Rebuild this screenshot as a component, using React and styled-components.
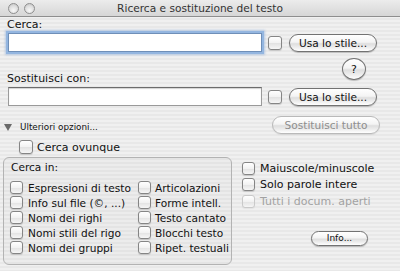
import React from 'react'
import styled, { createGlobalStyle, css } from 'styled-components'

const GlobalStyle = createGlobalStyle`
  html, body { margin: 0; padding: 0; }
  body {
    font-family: "Lucida Grande", "DejaVu Sans", sans-serif;
    font-size: 11px;
    color: #111;
  }
  * { box-sizing: border-box; }
`

const Window = styled.div`
  width: 400px;
  height: 271px;
  overflow: hidden;
  display: flex;
  flex-direction: column;
  background: repeating-linear-gradient(to bottom, #f0f0f0 0 2px, #e8e8e8 2px 4px);
`

const TitleBar = styled.div`
  height: 17px;
  flex: none;
  display: grid;
  grid-template-columns: 1fr auto 1fr;
  align-items: center;
  background: linear-gradient(to bottom, #ececec, #d6d6d6);
  border-bottom: 1px solid #8e8e8e;
`

const Lights = styled.div`
  display: flex;
  gap: 5px;
  padding-left: 8px;
`

const Light = styled.span`
  width: 11px;
  height: 11px;
  border-radius: 50%;
  border: 1px solid #8f8f8f;
  background: radial-gradient(circle at 50% 70%, #f8f8f8 0, #dedede 55%, #bdbdbd 100%);
`

const Title = styled.div`
  font-size: 10.6px;
  color: #333;
  line-height: 16px;
`

const Label = styled.div`
  line-height: 13px;
  padding-left: 7px;
  margin-top: ${p => p.$top || 0}px;
  align-self: ${p => p.$bottom ? 'flex-end' : 'auto'};
`

const FieldRow = styled.div`
  display: flex;
  align-items: center;
  height: 19px;
  padding-left: 8px;
  margin-top: ${p => p.$top || 0}px;
`

const TextField = styled.div`
  width: 254px;
  height: 19px;
  background: #fff;
  border: 1px solid #9a9a9a;
  border-top-color: #6c6c6c;
  box-shadow: inset 0 1px 1px rgba(0, 0, 0, 0.18);
  ${p => p.$focus && css`
    border-color: #6f8fb8;
    box-shadow: 0 0 0 2px #94b6e0, 0 0 2px 3px rgba(120, 160, 215, 0.45);
  `}
`

const Box = styled.span`
  flex: none;
  width: ${p => p.$size || 13}px;
  height: ${p => p.$size || 13}px;
  border-radius: 3px;
  border: 1px solid ${p => p.$disabled ? '#c9c9c9' : '#858585'};
  background: linear-gradient(to bottom, #ffffff, #f2f2f2 50%, #e2e2e2 51%, #f6f6f6);
  box-shadow: 0 1px 1px rgba(0, 0, 0, ${p => p.$disabled ? 0.05 : 0.15});
  margin-left: ${p => p.$left || 0}px;
`

const Button = styled.div`
  flex: none;
  display: flex;
  align-items: center;
  justify-content: center;
  width: ${p => p.$w}px;
  height: ${p => p.$h || 18}px;
  margin-left: ${p => p.$left || 0}px;
  margin-top: ${p => p.$top || 0}px;
  border-radius: 999px;
  font-size: ${p => p.$small ? 9 : 10.6}px;
  color: ${p => p.$disabled ? '#8e8e8e' : '#111'};
  border: 1px solid ${p => p.$disabled ? '#b9b9b9' : '#727272'};
  background: linear-gradient(to bottom, #ffffff 0%, #f4f4f4 45%, #dedede 55%, #f3f3f3 85%, #ffffff 100%);
  box-shadow: 0 1px 1px rgba(0, 0, 0, ${p => p.$disabled ? 0.08 : 0.22});
`

const LabelRow = styled.div`
  display: flex;
  justify-content: space-between;
  height: 27px;
  margin-top: 6px;
  padding-right: 34px;
`

const HelpButton = styled.div`
  width: 24px;
  height: 22px;
  border-radius: 50%;
  border: 1px solid #727272;
  display: flex;
  align-items: center;
  justify-content: center;
  font-size: 11px;
  background: linear-gradient(to bottom, #ffffff 0%, #f4f4f4 45%, #dedede 55%, #f3f3f3 85%, #ffffff 100%);
  box-shadow: 0 1px 1px rgba(0, 0, 0, 0.22);
`

const OptionsRow = styled.div`
  display: flex;
  justify-content: space-between;
  align-items: flex-end;
  height: 18px;
  margin-top: 10px;
  padding-right: 20px;
`

const Disclosure = styled.div`
  display: flex;
  align-items: center;
  font-size: 8.8px;
  line-height: 11px;
  padding-left: 4px;
  margin-bottom: 1px;
`

const Triangle = styled.span`
  width: 0;
  height: 0;
  border-left: 4px solid transparent;
  border-right: 4px solid transparent;
  border-top: 7px solid #6b6b6b;
  margin-right: 8px;
`

const Check = styled.div`
  display: flex;
  align-items: center;
  height: ${p => p.$h || 15}px;
  gap: ${p => p.$gap || 5}px;
  padding-left: ${p => p.$indent || 0}px;
  margin-top: ${p => p.$top || 0}px;
  color: ${p => p.$disabled ? '#a2a2a2' : '#111'};
  white-space: nowrap;
`

const Bottom = styled.div`
  display: flex;
  margin-top: 3px;
  padding-left: 3px;
`

const Group = styled.div`
  width: 229px;
  height: 108px;
  border: 1px solid #b3b3b3;
  border-radius: 6px;
  background: rgba(0, 0, 0, 0.015);
  padding: 3px 0 0 6px;
  font-size: 10.6px;
`

const GroupTitle = styled.div`
  line-height: 13px;
  padding-left: 1px;
  margin-bottom: 6px;
`

const GroupGrid = styled.div`
  display: grid;
  grid-template-columns: 128px auto;
  grid-template-rows: repeat(5, 15px);
  grid-auto-flow: column;
`

const Side = styled.div`
  display: flex;
  flex-direction: column;
  padding: 3px 0 0 10px;
`

const primary = ['Espressioni di testo', 'Info sul file (©, ...)', 'Nomi dei righi', 'Nomi stili del rigo', 'Nomi dei gruppi']
const secondary = ['Articolazioni', 'Forme intell.', 'Testo cantato', 'Blocchi testo', 'Ripet. testuali']

export default function App() {
  return (
    <>
      <GlobalStyle />
      <Window>
        <TitleBar>
          <Lights><Light /><Light /></Lights>
          <Title>Ricerca e sostituzione del testo</Title>
          <span />
        </TitleBar>

        <Label $top={1}>Cerca:</Label>
        <FieldRow $top={2}>
          <TextField $focus />
          <Box $size={14} $left={6} />
          <Button $w={88} $left={7}>Usa lo stile...</Button>
        </FieldRow>

        <LabelRow>
          <Label $bottom>Sostituisci con:</Label>
          <HelpButton>?</HelpButton>
        </LabelRow>
        <FieldRow $top={2}>
          <TextField />
          <Box $size={14} $left={6} />
          <Button $w={88} $left={7}>Usa lo stile...</Button>
        </FieldRow>

        <OptionsRow>
          <Disclosure><Triangle />Ulteriori opzioni...</Disclosure>
          <Button $w={108} $disabled>Sostituisci tutto</Button>
        </OptionsRow>

        <Check $indent={19} $h={14} $top={6} $gap={4}>
          <Box $size={14} />Cerca ovunque
        </Check>

        <Bottom>
          <Group>
            <GroupTitle>Cerca in:</GroupTitle>
            <GroupGrid>
              {primary.map(t => <Check key={t}><Box />{t}</Check>)}
              {secondary.map(t => <Check key={t} $gap={4}><Box />{t}</Check>)}
            </GroupGrid>
          </Group>
          <Side>
            <Check $h={16.5}><Box />Maiuscole/minuscole</Check>
            <Check $h={16.5}><Box />Solo parole intere</Check>
            <Check $h={16.5} $disabled><Box $disabled />Tutti i docum. aperti</Check>
            <Button $w={57} $h={15} $small $left={69} $top={21}>Info...</Button>
          </Side>
        </Bottom>
      </Window>
    </>
  )
}
